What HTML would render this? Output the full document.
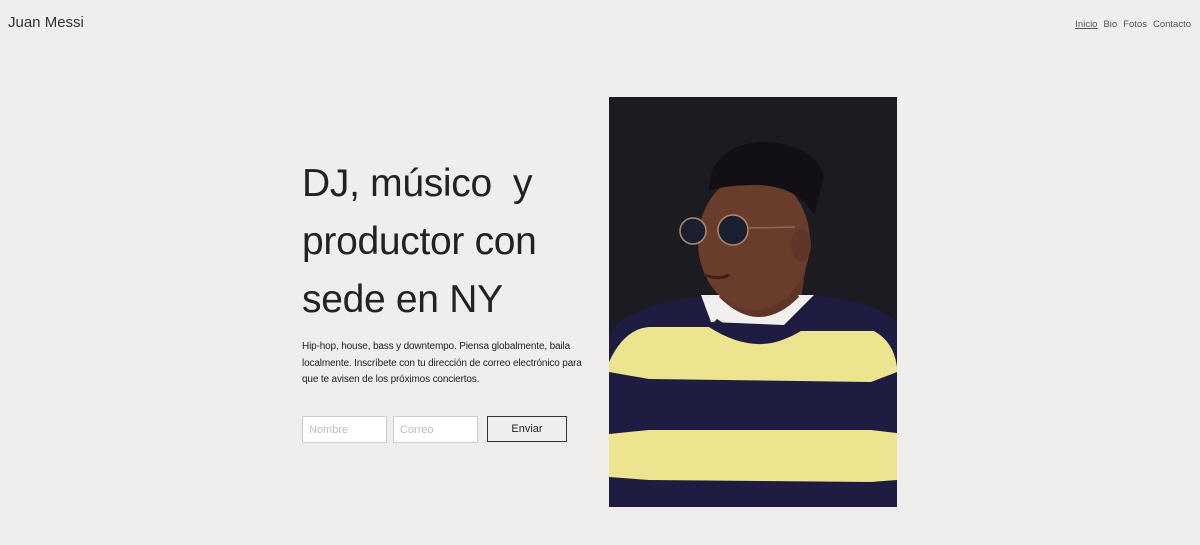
<!DOCTYPE html>
<html><head><meta charset="utf-8"><style>
*{margin:0;padding:0;box-sizing:border-box}
body{width:1200px;height:545px;background:#efeeec;font-family:"Liberation Sans",sans-serif;color:#222;position:relative;overflow:hidden}
.logo{position:absolute;left:8px;top:14px;font-size:15px;color:#333}
.nav{position:absolute;right:9px;top:19px;font-size:9.5px;color:#555}
.nav span{margin-left:6px}
.nav .a{text-decoration:underline}
h1{position:absolute;left:302px;top:155px;font-weight:normal;font-size:39px;line-height:58px;color:#222;letter-spacing:-0.3px;width:300px}
p{position:absolute;left:302px;top:339px;width:290px;font-size:10px;line-height:16.5px;color:#222;letter-spacing:-0.15px}
.in{position:absolute;top:416px;width:85px;height:27px;background:#fff;border:1px solid #ccc;font-size:11px;color:#bbb;padding:7px 6px}
.btn{position:absolute;left:487px;top:416px;width:80px;height:26px;border:1px solid #333;font-size:11px;text-align:center;line-height:24px;color:#222}
.ph{position:absolute;left:609px;top:97px;width:288px;height:410px;background:#1d1b22;overflow:hidden}
</style></head><body>
<div class="logo">Juan Messi</div>
<div class="nav"><span class="a">Inicio</span><span>Bio</span><span>Fotos</span><span>Contacto</span></div>
<h1>DJ, músico&nbsp; y productor con sede en NY</h1>
<p>Hip-hop, house, bass y downtempo. Piensa globalmente, baila localmente. Inscríbete con tu dirección de correo electrónico para que te avisen de los próximos conciertos.</p>
<div class="in" style="left:302px">Nombre</div>
<div class="in" style="left:393px">Correo</div>
<div class="btn">Enviar</div>
<div class="ph"><svg width="288" height="410" viewBox="0 0 288 410">
<rect width="288" height="410" fill="#1d1b22"/>
<path d="M120 215 L110 150 L200 150 L190 215 Z" fill="#5e3526"/>
<path d="M0 240 Q10 210 90 200 L200 198 Q270 205 288 225 L288 410 L0 410 Z" fill="#1e1c40"/>
<path d="M92 198 L102 225 L175 228 L205 198 Z" fill="#f2f0ee"/>
<path d="M110 200 Q150 240 190 200 L185 190 Q150 225 118 190 Z" fill="#5e3526"/>
<path d="M0 265 Q15 232 40 230 L100 230 Q150 262 190 234 L265 234 Q285 245 288 270 L288 275 L262 285 L40 282 L0 275 Z" fill="#ece48f"/>
<path d="M100 230 Q150 262 195 232 L190 224 Q150 250 108 222 Z" fill="#1e1c40"/>
<path d="M0 337 L40 333 L262 333 L288 336 L288 383 L262 385 L40 383 L0 380 Z" fill="#ece48f"/>
<ellipse cx="145" cy="145" rx="56" ry="68" fill="#6a3c2b"/>
<ellipse cx="192" cy="148" rx="10" ry="16" fill="#5e3526"/>
<path d="M100 95 Q100 50 150 45 Q205 45 215 80 L205 118 Q190 90 150 88 Q110 88 100 95 Z" fill="#121014"/>
<circle cx="84" cy="134" r="13" fill="#1a2030" stroke="#b08a6a" stroke-width="1.5"/>
<circle cx="124" cy="133" r="15" fill="#1a2030" stroke="#b08a6a" stroke-width="1.5"/>
<path d="M139 131 L186 130" stroke="#8a6a55" stroke-width="1.5"/>
<path d="M95 178 Q110 183 120 178" stroke="#3a2018" stroke-width="3" fill="none"/>
</svg></div>
</body></html>
